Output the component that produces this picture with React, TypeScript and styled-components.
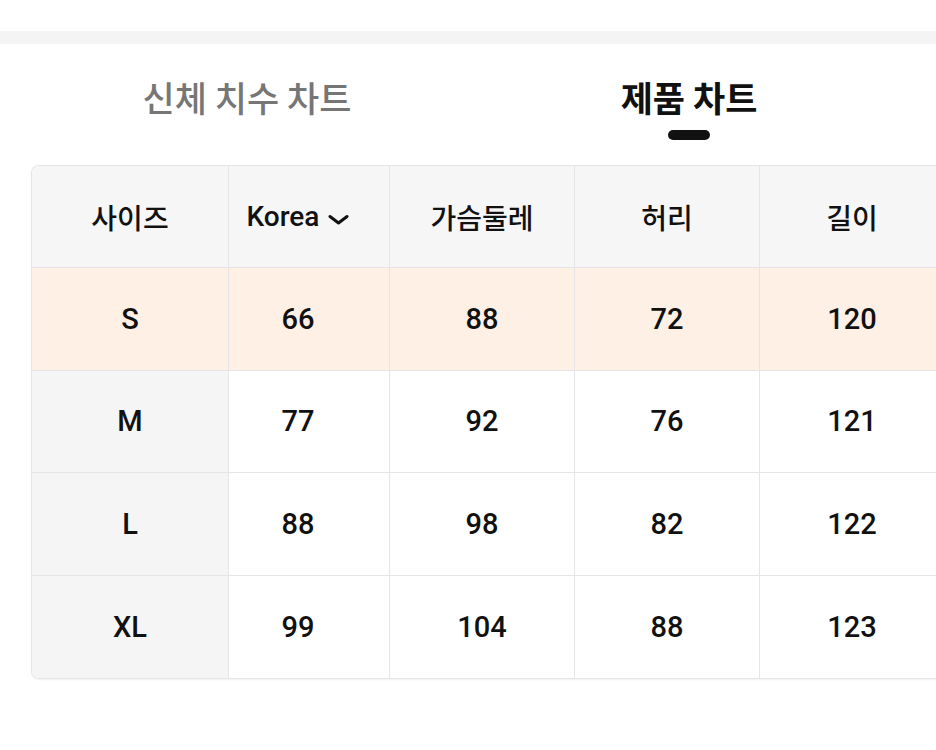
import React from 'react';
import styled, { createGlobalStyle } from 'styled-components';

const GlobalStyle = createGlobalStyle`
  html, body {
    margin: 0;
    padding: 0;
    background: #ffffff;
    overflow: hidden;
  }
  body {
    font-family: Roboto, "Noto Sans CJK KR", sans-serif;
    color: #111;
  }
`;

const Page = styled.div`
  width: 936px;
  height: 750px;
  overflow: hidden;
`;

const TopSpace = styled.div`
  height: 31px;
  background: #ffffff;
`;

const Divider = styled.div`
  height: 13px;
  background: #f4f4f4;
`;

const TabBar = styled.div`
  display: flex;
  padding: 32px 26px 0;
`;

const Tab = styled.div`
  flex: 1;
  display: flex;
  flex-direction: column;
  align-items: center;
`;

const TabLabel = styled.span<{ $active?: boolean }>`
  font-family: "Noto Sans CJK KR", sans-serif;
  font-size: 35px;
  line-height: 42px;
  font-weight: ${(p) => (p.$active ? 700 : 500)};
  color: ${(p) => (p.$active ? '#111' : '#767676')};
`;

const Indicator = styled.div<{ $active?: boolean }>`
  margin-top: 12px;
  width: 42px;
  height: 10px;
  border-radius: 5px;
  background: #111;
  visibility: ${(p) => (p.$active ? 'visible' : 'hidden')};
`;

const TableWrap = styled.div`
  margin: 25px 0 0 31px;
  width: 913px;
  border: 1px solid #e6e4e6;
  border-right: none;
  border-radius: 8px 0 0 8px;
  overflow: hidden;
  box-shadow: 0 1px 2px rgba(0, 0, 0, 0.06);
`;

const Grid = styled.div`
  display: grid;
  grid-template-columns: 197px 161px 185px 185px 185px;
  grid-auto-rows: 102.4px;
`;

const Cell = styled.div<{ $bg: string; $last?: boolean; $shift?: boolean }>`
  box-sizing: border-box;
  display: flex;
  align-items: center;
  justify-content: center;
  padding-right: ${(p) => (p.$shift ? '22px' : '0')};
  background: ${(p) => p.$bg};
  border-right: 1px solid #e6e4e6;
  border-bottom: ${(p) => (p.$last ? 'none' : '1px solid #e6e4e6')};
  font-size: 29px;
  font-weight: 500;
  color: #111;
`;

const HeadText = styled.span`
  font-family: Roboto, "Noto Sans CJK KR", sans-serif;
  font-size: 28px;
  font-weight: 500;
  display: inline-flex;
  align-items: center;
  gap: 9px;
`;

const Chevron = () => (
  <svg width="21" height="12" viewBox="0 0 21 12" fill="none" style={{ marginTop: 6 }}>
    <path d="M2 2.5 L10.5 9 L19 2.5" stroke="#111" strokeWidth="3" strokeLinecap="round" strokeLinejoin="round" />
  </svg>
);

const headers = ['사이즈', 'Korea', '가슴둘레', '허리', '길이'];

const rows = [
  ['S', '66', '88', '72', '120'],
  ['M', '77', '92', '76', '121'],
  ['L', '88', '98', '82', '122'],
  ['XL', '99', '104', '88', '123'],
];

function App() {
  return (
    <Page>
      <GlobalStyle />
      <TopSpace />
      <Divider />
      <TabBar>
        <Tab>
          <TabLabel>신체 치수 차트</TabLabel>
          <Indicator />
        </Tab>
        <Tab>
          <TabLabel $active>제품 차트</TabLabel>
          <Indicator $active />
        </Tab>
      </TabBar>

      <TableWrap>
        <Grid>
          {headers.map((h, ci) => (
            <Cell key={h} $bg="#f6f6f6" $shift={ci === 1}>
              <HeadText>
                {h}
                {h === 'Korea' ? <Chevron /> : null}
              </HeadText>
            </Cell>
          ))}
          {rows.map((row, ri) =>
            row.map((v, ci) => {
              const bg = ri === 0 ? '#fff0e6' : ci === 0 ? '#f5f5f5' : '#ffffff';
              return (
                <Cell key={ri + '-' + ci} $bg={bg} $last={ri === rows.length - 1} $shift={ci === 1}>
                  {v}
                </Cell>
              );
            })
          )}
        </Grid>
      </TableWrap>
    </Page>
  );
}

export default App;
